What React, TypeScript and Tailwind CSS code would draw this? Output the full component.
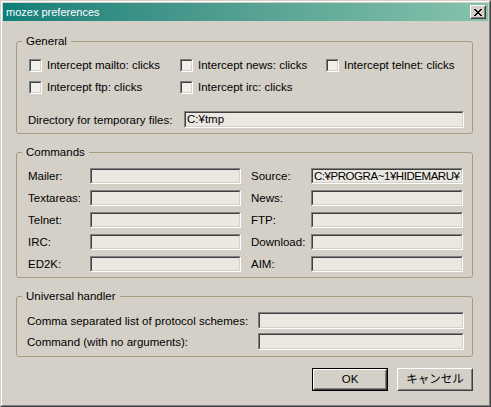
import React from "react";

const FONT = "font-['Liberation_Sans','Noto_Sans_CJK_JP',sans-serif]";

function Field({ w, h = 17, value, tight }: { w: number; h?: number; value?: string; tight?: boolean }) {
  return (
    <div
      className="border border-t-[#808080] border-l-[#808080] border-b-white border-r-white shrink-0"
      style={{ width: w, height: h }}
    >
      <div
        className={`h-full border border-t-[#404040] border-l-[#404040] border-b-[#d4d0c8] border-r-[#d4d0c8] bg-[#ebe8e1] overflow-hidden whitespace-nowrap pl-[1px] text-[11.5px] leading-[13px] text-black ${
          tight ? "tracking-[-0.45px]" : ""
        }`}
      >
        {value}
      </div>
    </div>
  );
}

function Check({ label, w }: { label: string; w?: number }) {
  return (
    <div className="flex items-center h-[13px] gap-[5px] shrink-0" style={w ? { width: w } : undefined}>
      <div className="w-[13px] h-[13px] border border-t-[#808080] border-l-[#808080] border-b-white border-r-white">
        <div className="h-full border border-t-[#404040] border-l-[#404040] border-b-[#d4d0c8] border-r-[#d4d0c8] bg-[#f2f0eb]" />
      </div>
      <span className="text-[11.5px] leading-[13px] whitespace-nowrap">{label}</span>
    </div>
  );
}

function Group({ title, children, className = "" }: { title: string; children: React.ReactNode; className?: string }) {
  return (
    <fieldset className={`ml-[13px] w-[457px] border border-[#a89a7c] rounded-[3px] p-0 ${className}`}>
      <legend className="ml-[5px] px-[4px] text-[11.5px] leading-[14px] text-black">{title}</legend>
      {children}
    </fieldset>
  );
}

function Button({ label, isDefault }: { label: string; isDefault?: boolean }) {
  const inner = (
    <div className="h-full border border-t-white border-l-white border-b-[#404040] border-r-[#404040]">
      <div className="h-full border border-t-[#d4d0c8] border-l-[#d4d0c8] border-b-[#808080] border-r-[#808080] flex items-center justify-center text-[11.5px] leading-[13px]">
        {label}
      </div>
    </div>
  );
  return (
    <div className={`w-[76px] h-[23px] bg-[#d4d0c8] ${isDefault ? "border border-black" : ""}`}>
      {isDefault ? <div className="h-full">{inner}</div> : inner}
    </div>
  );
}

export default function App() {
  const left = [
    ["Mailer:", ""],
    ["Textareas:", ""],
    ["Telnet:", ""],
    ["IRC:", ""],
    ["ED2K:", ""],
  ];
  const right = [
    ["Source:", "C:¥PROGRA~1¥HIDEMARU¥"],
    ["News:", ""],
    ["FTP:", ""],
    ["Download:", ""],
    ["AIM:", ""],
  ];
  return (
    <div className={`${FONT} w-[491px] h-[407px] bg-[#d4d0c8] text-black border border-t-[#d4d0c8] border-l-[#d4d0c8] border-b-[#404040] border-r-[#404040]`}>
      <div className="h-full border border-t-white border-l-white border-b-[#808080] border-r-[#808080]">
        <div className="h-full border border-[#d4d0c8] flex flex-col">
          {/* Title bar */}
          <div className="h-[18px] flex items-center justify-between bg-gradient-to-r from-[#0c7f79] to-[#86c3ac] pl-[3px] pr-[2px]">
            <span className="text-white text-[11px] leading-[14px] whitespace-nowrap">mozex preferences</span>
            <div className="w-[16px] h-[14px] border border-t-white border-l-white border-b-[#404040] border-r-[#404040] bg-[#d4d0c8]">
              <div className="h-full border border-t-[#d4d0c8] border-l-[#d4d0c8] border-b-[#808080] border-r-[#808080] flex items-center justify-center">
                <svg width="8" height="7" viewBox="0 0 8 7" shapeRendering="crispEdges">
                  <path d="M0 0h2v1H0zM6 0h2v1H6zM1 1h2v1H1zM5 1h2v1H5zM2 2h4v1H2zM3 3h2v1H3zM2 4h4v1H2zM1 5h2v1H1zM5 5h2v1H5zM0 6h2v1H0zM6 6h2v1H6z" fill="#000" />
                </svg>
              </div>
            </div>
          </div>

          {/* General */}
          <Group title="General" className="mt-[13px]">
            <div className="pt-[11px] pl-[11px] pb-[5px]">
              <div className="flex ml-[1px]">
                <Check label="Intercept mailto: clicks" w={151} />
                <Check label="Intercept news: clicks" w={146} />
                <Check label="Intercept telnet: clicks" />
              </div>
              <div className="flex ml-[1px] mt-[9px]">
                <Check label="Intercept ftp: clicks" w={151} />
                <Check label="Intercept irc: clicks" w={146} />
              </div>
              <div className="flex items-center mt-[17px]">
                <span className="w-[156px] text-[11.5px] leading-[14px] whitespace-nowrap">Directory for temporary files:</span>
                <Field w={280} value="C:¥tmp" />
              </div>
            </div>
          </Group>

          {/* Commands */}
          <Group title="Commands" className="mt-[11px]">
            <div className="pt-[9px] pl-[11px] pb-[5px] flex gap-[10px]">
              <div className="flex flex-col gap-[6px]">
                {left.map(([l, v]) => (
                  <div key={l} className="flex items-center h-[16px]">
                    <span className="w-[62px] text-[11.5px] leading-[14px] whitespace-nowrap">{l}</span>
                    <Field w={151} h={16} value={v} />
                  </div>
                ))}
              </div>
              <div className="flex flex-col gap-[6px]">
                {right.map(([l, v]) => (
                  <div key={l} className="flex items-center h-[16px]">
                    <span className="w-[60px] text-[11.5px] leading-[14px] whitespace-nowrap">{l}</span>
                    <Field w={152} h={16} value={v} tight={!!v} />
                  </div>
                ))}
              </div>
            </div>
          </Group>

          {/* Universal handler */}
          <Group title="Universal handler" className="mt-[11px]">
            <div className="pt-[9px] pl-[10px] pb-[6px] flex flex-col gap-[4px]">
              <div className="flex items-center h-[17px]">
                <span className="w-[231px] text-[11.5px] leading-[14px] whitespace-nowrap">Comma separated list of protocol schemes:</span>
                <Field w={206} />
              </div>
              <div className="flex items-center h-[17px]">
                <span className="w-[231px] text-[11.5px] leading-[14px] whitespace-nowrap">Command (with no arguments):</span>
                <Field w={206} />
              </div>
            </div>
          </Group>

          {/* Buttons */}
          <div className="ml-[13px] w-[457px] mt-[11px] flex justify-end gap-[9px]">
            <Button label="OK" isDefault />
            <Button label="キャンセル" />
          </div>
        </div>
      </div>
    </div>
  );
}
